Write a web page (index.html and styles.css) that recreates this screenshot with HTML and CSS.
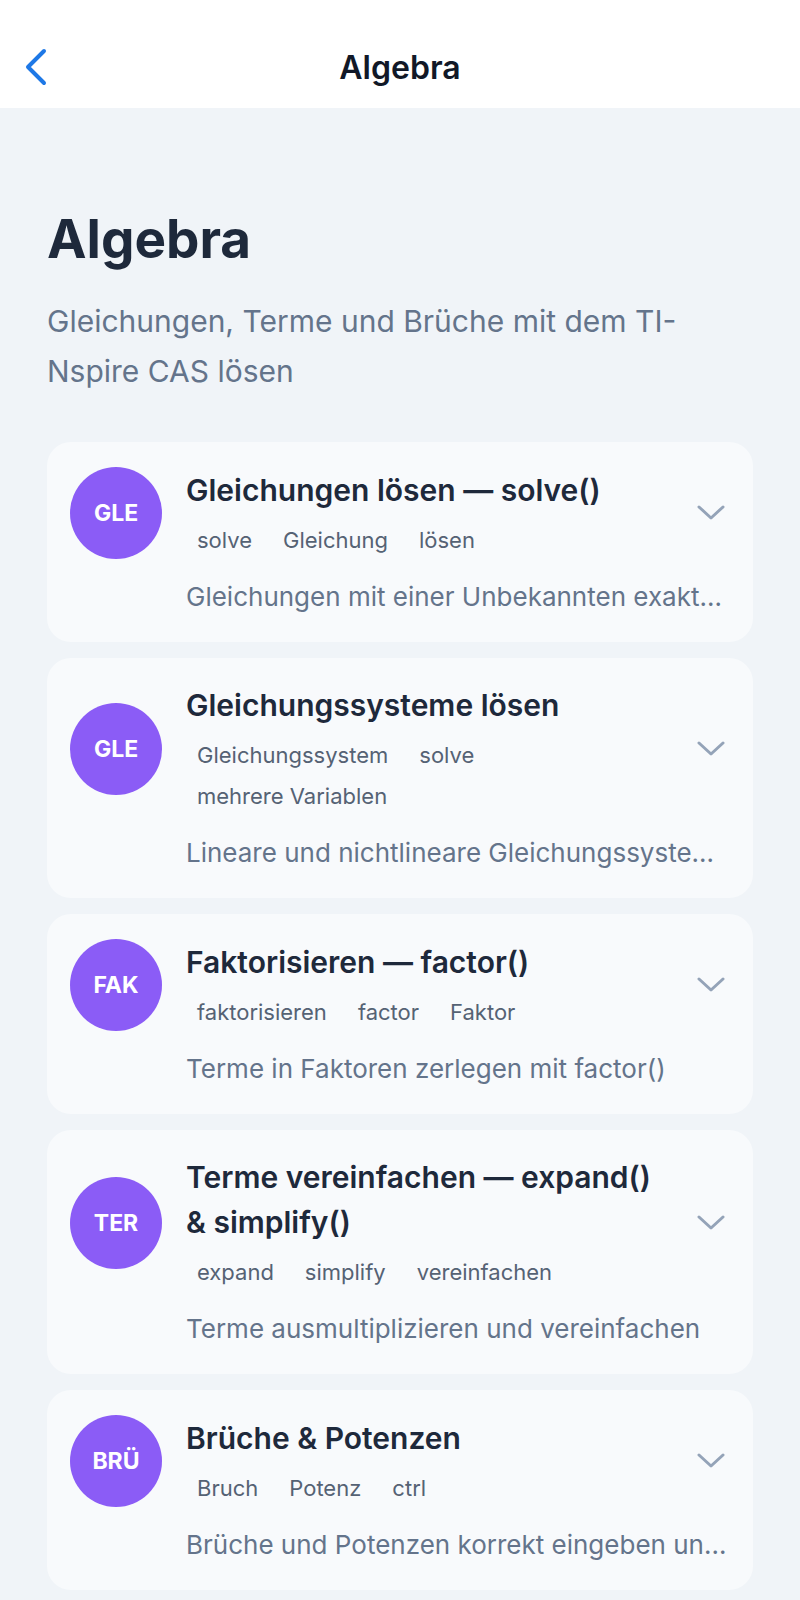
FILE: index.html
```html
<!DOCTYPE html>
<html lang="de">
<head>
    <meta charset="UTF-8">
    <title>Algebra</title>
    <link rel="stylesheet" href="styles.css">
</head>
<body>

<header class="topbar">
    <button class="back-btn" aria-label="Zurück">
        <svg width="24" height="38" viewBox="0 0 24 38">
            <polyline points="20,3 4,19 20,35" fill="none" stroke="#1e78e6" stroke-width="4" stroke-linecap="round" stroke-linejoin="round"/>
        </svg>
    </button>
    <div class="topbar-title">Algebra</div>
    <div class="topbar-spacer"></div>
</header>

<main class="content">
    <h1 class="page-title">Algebra</h1>
    <p class="page-subtitle">Gleichungen, Terme und Brüche mit dem TI-Nspire CAS lösen</p>

    <div class="topic-list">
        <div class="topic-card">
            <div class="topic-head">
                <div class="avatar">GLE</div>
                <div class="topic-info">
                    <div class="topic-title">Gleichungen lösen — solve()</div>
                    <div class="tags">
                        <span class="tag">solve</span>
                        <span class="tag">Gleichung</span>
                        <span class="tag">lösen</span>
                    </div>
                </div>
                <div class="chevron">
                    <svg width="28" height="16" viewBox="0 0 28 16"><polyline points="2,2 14,13 26,2" fill="none" stroke="#94a3b8" stroke-width="3" stroke-linecap="round" stroke-linejoin="round"/></svg>
                </div>
            </div>
            <div class="topic-desc">Gleichungen mit einer Unbekannten exakt und numerisch lösen</div>
        </div>

        <div class="topic-card">
            <div class="topic-head">
                <div class="avatar">GLE</div>
                <div class="topic-info">
                    <div class="topic-title">Gleichungssysteme lösen</div>
                    <div class="tags">
                        <span class="tag">Gleichungssystem</span>
                        <span class="tag">solve</span>
                        <span class="tag">mehrere Variablen</span>
                    </div>
                </div>
                <div class="chevron">
                    <svg width="28" height="16" viewBox="0 0 28 16"><polyline points="2,2 14,13 26,2" fill="none" stroke="#94a3b8" stroke-width="3" stroke-linecap="round" stroke-linejoin="round"/></svg>
                </div>
            </div>
            <div class="topic-desc">Lineare und nichtlineare Gleichungssysteme mit solve() lösen</div>
        </div>

        <div class="topic-card">
            <div class="topic-head">
                <div class="avatar">FAK</div>
                <div class="topic-info">
                    <div class="topic-title">Faktorisieren — factor()</div>
                    <div class="tags">
                        <span class="tag">faktorisieren</span>
                        <span class="tag">factor</span>
                        <span class="tag">Faktor</span>
                    </div>
                </div>
                <div class="chevron">
                    <svg width="28" height="16" viewBox="0 0 28 16"><polyline points="2,2 14,13 26,2" fill="none" stroke="#94a3b8" stroke-width="3" stroke-linecap="round" stroke-linejoin="round"/></svg>
                </div>
            </div>
            <div class="topic-desc">Terme in Faktoren zerlegen mit factor()</div>
        </div>

        <div class="topic-card">
            <div class="topic-head">
                <div class="avatar">TER</div>
                <div class="topic-info">
                    <div class="topic-title">Terme vereinfachen — expand() &amp; simplify()</div>
                    <div class="tags">
                        <span class="tag">expand</span>
                        <span class="tag">simplify</span>
                        <span class="tag">vereinfachen</span>
                    </div>
                </div>
                <div class="chevron">
                    <svg width="28" height="16" viewBox="0 0 28 16"><polyline points="2,2 14,13 26,2" fill="none" stroke="#94a3b8" stroke-width="3" stroke-linecap="round" stroke-linejoin="round"/></svg>
                </div>
            </div>
            <div class="topic-desc">Terme ausmultiplizieren und vereinfachen</div>
        </div>

        <div class="topic-card">
            <div class="topic-head">
                <div class="avatar">BRÜ</div>
                <div class="topic-info">
                    <div class="topic-title">Brüche &amp; Potenzen</div>
                    <div class="tags">
                        <span class="tag">Bruch</span>
                        <span class="tag">Potenz</span>
                        <span class="tag">ctrl</span>
                    </div>
                </div>
                <div class="chevron">
                    <svg width="28" height="16" viewBox="0 0 28 16"><polyline points="2,2 14,13 26,2" fill="none" stroke="#94a3b8" stroke-width="3" stroke-linecap="round" stroke-linejoin="round"/></svg>
                </div>
            </div>
            <div class="topic-desc">Brüche und Potenzen korrekt eingeben und umformen</div>
        </div>
    </div>
</main>

</body>
</html>
```

FILE: styles.css
```css
* {
    box-sizing: border-box;
}

body {
    margin: 0;
    font-family: 'Inter', 'Noto Sans', sans-serif;
    background-color: #f0f4f8;
    color: #1e293b;
}

.topbar {
    height: 108px;
    padding: 26px 20px 0 20px;
    background: #ffffff;
    display: flex;
    align-items: center;
}

.back-btn {
    width: 40px;
    height: 48px;
    padding: 0;
    border: none;
    background: none;
    display: flex;
    align-items: center;
    justify-content: flex-start;
    padding-left: 4px;
    cursor: pointer;
}

.topbar-title {
    flex: 1;
    text-align: center;
    font-size: 32px;
    font-weight: 600;
    color: #111827;
}

.topbar-spacer {
    width: 40px;
}

.content {
    padding: 98px 47px 40px 47px;
}

.page-title {
    margin: 0;
    font-size: 53px;
    line-height: 66px;
    font-weight: 700;
    color: #1e293b;
}

.page-subtitle {
    margin: 24px 0 0 0;
    font-size: 30px;
    line-height: 50px;
    color: #64748b;
}

.topic-list {
    margin-top: 46px;
    display: flex;
    flex-direction: column;
    gap: 16px;
}

.topic-card {
    background: #f8fafc;
    border-radius: 24px;
    padding: 25px 26px 26px 23px;
}

.topic-head {
    display: flex;
    align-items: center;
    gap: 24px;
}

.avatar {
    width: 92px;
    height: 92px;
    flex-shrink: 0;
    border-radius: 50%;
    background: #8b5cf6;
    color: #ffffff;
    font-size: 23px;
    font-weight: 700;
    display: flex;
    align-items: center;
    justify-content: center;
}

.topic-info {
    flex: 1;
    min-width: 0;
}

.topic-title {
    font-size: 30px;
    line-height: 45px;
    font-weight: 600;
    color: #1e293b;
}

.tags {
    display: flex;
    flex-wrap: wrap;
    column-gap: 9px;
    row-gap: 3px;
    margin-top: 8px;
}

.tag {
    padding: 4px 11px;
    font-size: 22px;
    line-height: 30px;
    color: #556274;
}

.chevron {
    width: 32px;
    flex-shrink: 0;
    display: flex;
    justify-content: center;
}

.topic-desc {
    margin: 19px 0 0 116px;
    font-size: 26px;
    line-height: 38px;
    color: #64748b;
    white-space: nowrap;
    overflow: hidden;
    text-overflow: ellipsis;
}
```
